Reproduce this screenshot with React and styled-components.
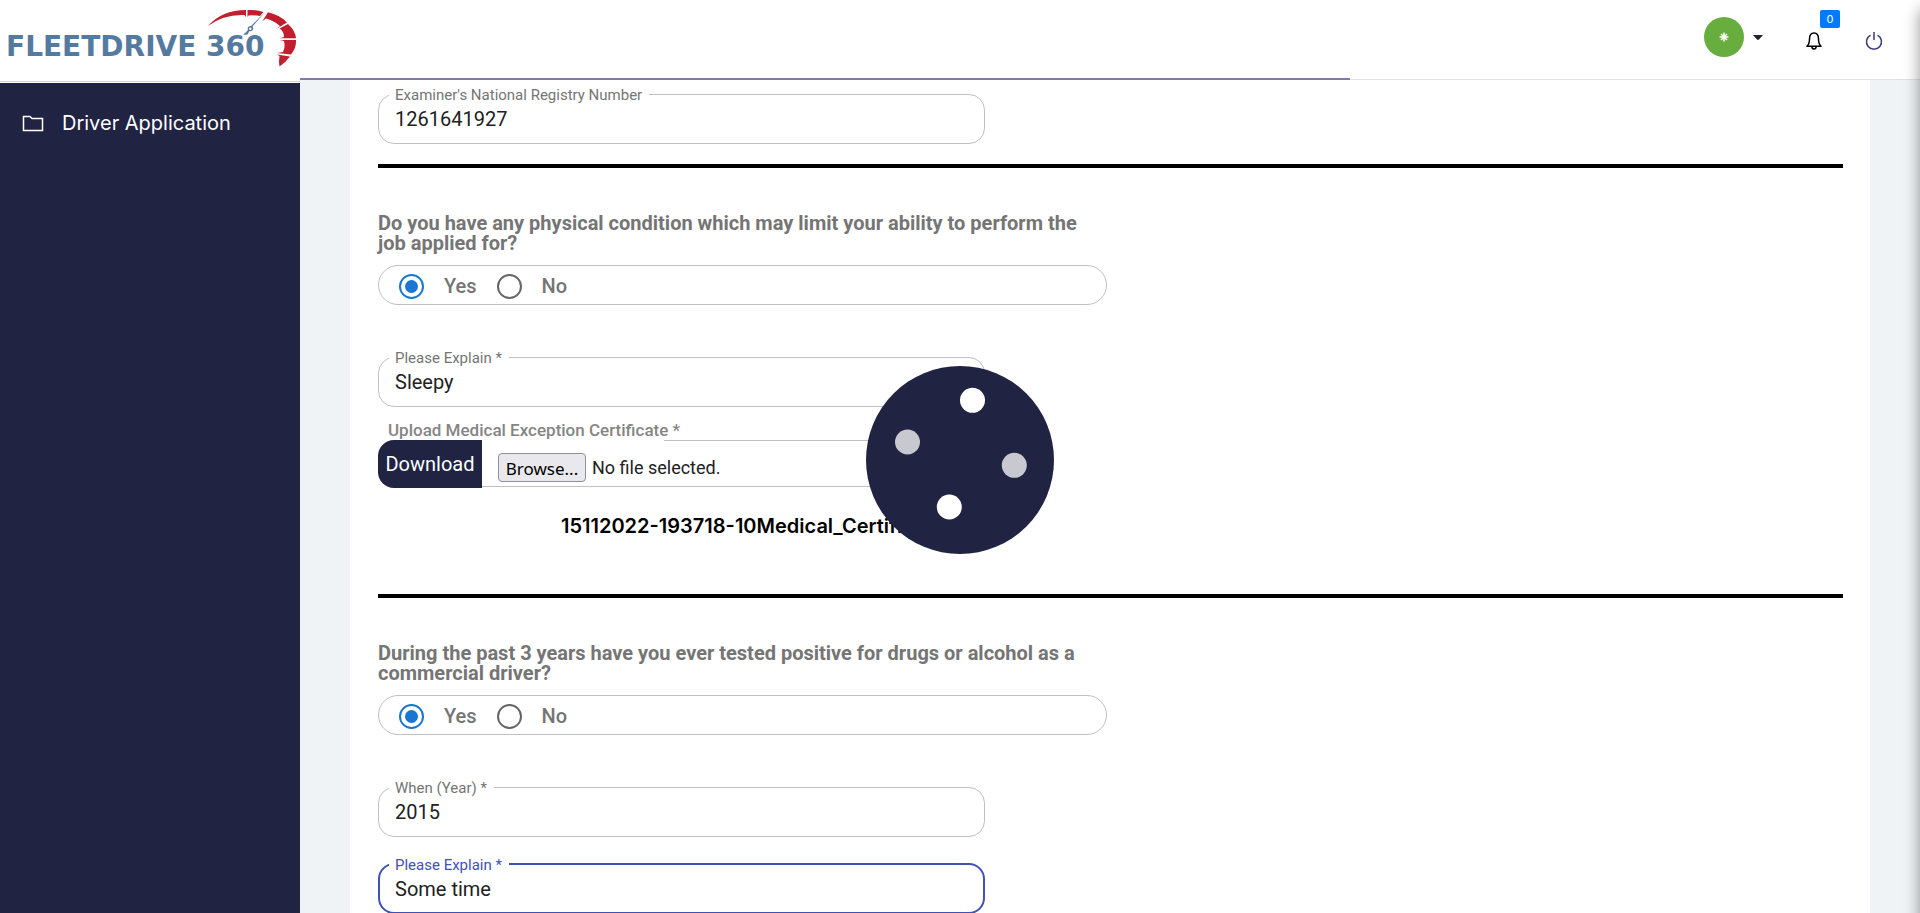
import React, { useState } from "react";
import styled, { createGlobalStyle, css } from "styled-components";

const navy = "#202342";
const roboto = `Roboto, "Liberation Sans", sans-serif`;
const display = `Inter, "Liberation Sans", sans-serif`;

const GlobalStyle = createGlobalStyle`
  * { box-sizing: border-box; }
  body { margin: 0; background: #eff3f6; font-family: ${roboto}; color: #212121; }
  button, input { font: inherit; }
`;

const Page = styled.div`
  display: grid;
  grid-template-columns: 300px minmax(0, 1fr);
  height: 100vh;
  overflow: hidden;
`;

const Side = styled.aside`
  display: flex;
  flex-direction: column;
  background: ${navy};
`;

const Brand = styled.a`
  display: block;
  height: 83px;
  padding: 8px 0 0 7px;
  background: #fff;
  box-shadow: inset 0 -1px #fff, inset 0 -2px #cfd6d2;
  svg { display: block; }
`;

const Nav = styled.nav`
  padding: 24px 22px;
`;

const NavLink = styled.a`
  display: flex;
  align-items: center;
  gap: 18px;
  height: 32px;
  color: #fff;
  font: 400 20px/32px ${display};
  text-decoration: none;
`;

const Content = styled.div`
  display: flex;
  flex-direction: column;
  min-width: 0;
  min-height: 0;
`;

const Header = styled.header`
  position: relative;
  flex: none;
  display: flex;
  justify-content: flex-end;
  align-items: flex-start;
  height: 80px;
  padding: 17px 36px 0 0;
  background: #fff;
  border-bottom: 1px solid #dee2e6;
`;

const LoadBar = styled.div`
  position: absolute;
  left: 0;
  bottom: -1px;
  width: 64.8%;
  height: 2px;
  background: #7c7bab;
`;

const AccountButton = styled.button`
  display: flex;
  align-items: center;
  gap: 9px;
  margin-right: 41px;
  padding: 0;
  border: 0;
  background: none;
`;

const Avatar = styled.span`
  display: grid;
  place-items: center;
  width: 40px;
  height: 40px;
  border-radius: 50%;
  background: #67ae3f;
`;

const IconButton = styled.button`
  position: relative;
  display: grid;
  place-items: center;
  width: 20px;
  height: 20px;
  margin: 14px 0 0;
  margin-right: ${(p) => (p.$last ? 0 : "40px")};
  padding: 0;
  border: 0;
  background: none;
`;

const Badge = styled.span`
  position: absolute;
  left: 16px;
  top: -21px;
  width: 20px;
  height: 18px;
  border-radius: 2px;
  background: #007bff;
  color: #fff;
  font: 400 11px/18px ${display};
  text-align: center;
`;

const Main = styled.main`
  flex: 1;
  min-height: 0;
  overflow: hidden;
  padding: 0 50px;
`;

const Card = styled.form`
  min-height: 100%;
  padding: 14px 27px 24px 28px;
  background: #fff;
`;

const Rule = styled.hr`
  height: 4px;
  margin: 0;
  border: 0;
  background: #000;
`;

const Block = styled.section`
  padding: ${(p) => p.$pad || "0"};
`;

const outline = css`
  margin: 0;
  min-width: 0;
  border: 1px solid #c0c0c0;
  border-radius: 16px;
`;

const FieldBox = styled.fieldset`
  ${outline}
  width: 607px;
  max-width: 100%;
  height: 58px;
  margin-top: ${(p) => p.$gap || "-8px"};
  padding: 0 16px;
  ${(p) => p.$active && css`border: 2px solid #3f51b5; padding: 0 15px;`}
`;

const FieldLegend = styled.legend`
  height: 16px;
  margin-left: -6px;
  padding: 0 7px 0 6px;
  color: ${(p) => (p.$active ? "#3f51b5" : "#757575")};
  font-size: 15px;
  line-height: 18px;
`;

const FieldInput = styled.input`
  display: block;
  width: 100%;
  height: 35px;
  padding: 0;
  border: 0;
  outline: 0;
  background: none;
  color: #212121;
  font-size: 20px;
  line-height: 35px;
`;

const Choice = styled.fieldset`
  width: 729px;
  max-width: 100%;
  margin: 0;
  padding: 0;
  border: 0;
`;

const Question = styled.legend`
  padding: 0;
  color: #757575;
  font-size: 20px;
  font-weight: 700;
  line-height: 20px;
`;

const ChoiceRow = styled.div`
  ${outline}
  display: flex;
  align-items: center;
  gap: 20px;
  height: 40px;
  margin-top: 12px;
  padding: 2px 20px 0;
  border-radius: 20px;
`;

const ChoiceLabel = styled.label`
  display: flex;
  align-items: center;
  gap: 20px;
  color: #757575;
  font-size: 20px;
  font-weight: 500;
`;

const Radio = styled.input`
  appearance: none;
  display: grid;
  place-items: center;
  width: 25px;
  height: 25px;
  margin: 0;
  border: 2px solid #666;
  border-radius: 50%;
  &:checked { border-color: #1976d2; }
  &:checked::before {
    content: "";
    width: 13px;
    height: 13px;
    border-radius: 50%;
    background: #1976d2;
  }
`;

const Upload = styled.div`
  width: 607px;
  max-width: 100%;
  padding-top: 13px;
`;

const UploadTitle = styled.div`
  padding-left: 10px;
  color: #858585;
  font-size: 17px;
  font-weight: 500;
  line-height: 20px;
`;

const UploadRow = styled.div`
  display: flex;
  align-items: center;
  height: 48px;
  border-radius: 16px 0 0 16px;
  background: linear-gradient(#c0c0c0, #c0c0c0) 286px 0 / 100% 1px no-repeat,
    linear-gradient(#c0c0c0, #c0c0c0) 104px 46px / 100% 1px no-repeat;
`;

const Download = styled.button`
  width: 104px;
  height: 48px;
  margin-right: 16px;
  padding: 0;
  border: 0;
  border-radius: 16px 0 0 16px;
  background: ${navy};
  color: #fff;
  font-size: 20px;
`;

const FilePicker = styled.label`
  display: flex;
  align-items: center;
  gap: 6px;
  padding-top: 7px;
  font-size: 18px;
`;

const Browse = styled.span`
  width: 88px;
  height: 29px;
  border: 1px solid #8f8f9d;
  border-radius: 4px;
  background: #e9e9ed;
  color: #000;
  font: 400 17px/29px "Noto Sans", sans-serif;
  text-align: center;
`;

const HiddenFile = styled.input`
  position: absolute;
  width: 1px;
  height: 1px;
  opacity: 0;
`;

const FileName = styled.p`
  width: 729px;
  max-width: 100%;
  margin: 24px 0 0;
  padding-left: 183px;
  color: #000;
  font: 600 20px/28px ${display};
  white-space: nowrap;
`;

const Loader = styled.div`
  position: fixed;
  left: 50%;
  top: calc(50% + 3px);
  width: 188px;
  height: 188px;
  margin: -94px 0 0 -94px;
  svg { display: block; }
`;

const EdgeShadow = styled.div`
  position: fixed;
  top: 10px;
  right: -20px;
  bottom: -20px;
  width: 20px;
  box-shadow: 0 0 16px rgba(0, 0, 0, 0.42);
`;

function Field({ id, label, value, active, gap }) {
  const [text, setText] = useState(value);
  return (
    <FieldBox $active={active} $gap={gap}>
      <FieldLegend $active={active}>
        <label htmlFor={id}>{label}</label>
      </FieldLegend>
      <FieldInput id={id} value={text} onChange={(e) => setText(e.target.value)} />
    </FieldBox>
  );
}

function YesNo({ name, children }) {
  return (
    <Choice>
      <Question>{children}</Question>
      <ChoiceRow>
        <ChoiceLabel>
          <Radio type="radio" name={name} value="yes" defaultChecked />
          Yes
        </ChoiceLabel>
        <ChoiceLabel>
          <Radio type="radio" name={name} value="no" />
          No
        </ChoiceLabel>
      </ChoiceRow>
    </Choice>
  );
}

function Logo() {
  return (
    <svg width="292" height="62" viewBox="7 8 292 62" role="img" aria-label="Fleetdrive 360">
      <text x="6" y="56" fill="#557a9f" fontFamily="DejaVu Sans" fontWeight="700" fontSize="28">
        FLEETDRIVE 360
      </text>
      <g fill="#c01f2e">
        <path d="M208 26Q222 10 246 10V17L244.500 15Q224 14 208 26Z" />
        <path d="M247.500 10Q256 9.500 263.500 12L260 16Q254 15 248.500 15.500L247.500 17Z" />
        <path d="M268 12.300Q280 15 287 22.500L276 29L280 26Q274 20.500 266 18.500L262.500 21Z" />
        <path d="M288 24Q295.500 31 296 38.300H280L284 37Q284 31 279.500 28.500Z" />
        <path d="M296 40Q296.500 48 291 54.500L277 53L283 52Q285.500 47 284 41L280 40Z" />
        <path d="M290 56.500Q286 62 279.500 66.500Q278.500 62 279.500 56L277 54.500Z" />
      </g>
      <path d="M265.500 11.500L252.500 26.500A2.800 2.800 0 0 1 249.500 31L247.500 34.500L243 35L248 30A2.800 2.800 0 0 1 251 26Z" fill="#557a9f" />
      <circle cx="250.300" cy="28.700" r="1.200" fill="#fff" />
    </svg>
  );
}

export default function App() {
  return (
    <>
      <GlobalStyle />
      <Page>
        <Side>
          <Brand href="#home"><Logo /></Brand>
          <Nav>
            <NavLink href="#application">
              <svg width="22" height="17" viewBox="0 0 22 17" fill="none" stroke="#fff" strokeWidth="1.500">
                <path d="M1.500 15.500V1.500H8L10 3.500H20.500V15.500Z" />
              </svg>
              Driver Application
            </NavLink>
          </Nav>
        </Side>
        <Content>
          <Header>
            <AccountButton type="button" aria-label="Account">
              <Avatar>
                <svg width="10" height="10" viewBox="-5 -5 10 10" stroke="#fff" strokeWidth="1.500">
                  <path d="M0-4.500V4.500M-4.500 0H4.500M-3-3L3 3M3-3L-3 3" />
                </svg>
              </Avatar>
              <svg width="10" height="5" viewBox="0 0 10 5"><path d="M0 0H10L6 4.500Q5 5.300 4 4.500Z" fill="#212529" /></svg>
            </AccountButton>
            <IconButton type="button" aria-label="Notifications">
              <svg width="16" height="18" viewBox="0 0 16 18" fill="none" stroke="#000" strokeWidth="1.500" strokeLinejoin="round">
                <path d="M1 14.200H15Q12.500 12 12.500 7Q12.500 1 8 1Q3.500 1 3.500 7Q3.500 12 1 14.200ZM5.800 14.500Q6 17 8 17Q10 17 10.200 14.500" />
              </svg>
              <Badge>0</Badge>
            </IconButton>
            <IconButton type="button" aria-label="Log out" $last>
              <svg width="18" height="20" viewBox="0 0 18 20" fill="none" stroke="#3b3b82" strokeWidth="1.500">
                <path d="M9 1V9M5.500 4.200A7.500 7.500 0 1 0 12.500 4.200" />
              </svg>
            </IconButton>
            <LoadBar />
          </Header>
          <Main>
            <Card>
              <Block $pad="0 0 20px">
                <Field id="registry" label="Examiner's National Registry Number" value="1261641927" />
              </Block>
              <Rule />
              <Block $pad="45px 0 54px">
                <YesNo name="condition">
                  Do you have any physical condition which may limit your ability to perform the job applied for?
                </YesNo>
                <Field id="condition-note" label="Please Explain *" value="Sleepy" gap="44px" />
                <Upload>
                  <UploadTitle>Upload Medical Exception Certificate *</UploadTitle>
                  <UploadRow>
                    <Download type="button">Download</Download>
                    <FilePicker>
                      <HiddenFile type="file" />
                      <Browse>Browse...</Browse>
                      No file selected.
                    </FilePicker>
                  </UploadRow>
                </Upload>
                <FileName>15112022-193718-10Medical_Certificate</FileName>
              </Block>
              <Rule />
              <Block $pad="45px 0 0">
                <YesNo name="tested">
                  During the past 3 years have you ever tested positive for drugs or alcohol as a commercial driver?
                </YesNo>
                <Field id="tested-year" label="When (Year) *" value="2015" gap="44px" />
                <Field id="tested-note" label="Please Explain *" value="Some time" gap="19px" active />
              </Block>
            </Card>
          </Main>
        </Content>
      </Page>
      <Loader role="status" aria-label="Loading">
        <svg width="188" height="188" viewBox="0 0 188 188">
          <circle cx="94" cy="94" r="94" fill={navy} />
          <circle cx="106.500" cy="34.300" r="12.500" fill="#fff" />
          <circle cx="83.300" cy="141" r="12.500" fill="#fff" />
          <circle cx="41.500" cy="76" r="12.500" fill="#c8c8d0" />
          <circle cx="148.300" cy="99.300" r="12.500" fill="#c8c8d0" />
        </svg>
      </Loader>
      <EdgeShadow />
    </>
  );
}
